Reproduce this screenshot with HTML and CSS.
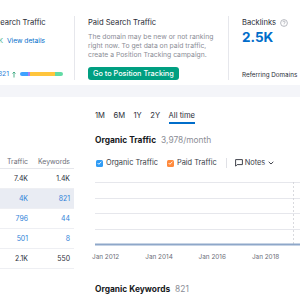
FILE: index.html
```html
<!doctype html>
<html lang="en">
  <head>
    <meta charset="UTF-8" />
    <meta name="viewport" content="width=device-width, initial-scale=1.0" />
    <title>Domain Overview</title>
    <link rel="stylesheet" href="styles.css">
  </head>
  <body>
    <div class="page">
      <section class="summary">
        <div class="summary-col organic">
          <div class="summary-title">Organic Search Traffic</div>
          <div class="link-row">
            <span class="trend">+12.5K</span>
            <a class="link" href="#">View details</a>
          </div>
          <div class="summary-foot">
            <span class="foot-count"><span class="foot-label">Keywords</span> 821</span>
            <svg class="up" width="4" height="7" viewBox="0 0 4 7">
              <path d="M2 6.5V1M0.5 2.5L2 1l1.5 1.5" fill="none" stroke="#3aa77f" stroke-width="0.9" />
            </svg>
            <div class="dist-bar">
              <span class="seg seg-blue" style="width: 18.6%"></span>
              <span class="seg seg-purple" style="width: 4.7%"></span>
              <span class="seg seg-yellow" style="width: 58.1%"></span>
              <span class="seg seg-green" style="width: 18.6%"></span>
            </div>
          </div>
        </div>

        <div class="summary-col paid">
          <div class="summary-title">Paid Search Traffic</div>
          <p class="paid-text">The domain may be new or not ranking right now. To get data on paid traffic, create a Position Tracking campaign.</p>
          <button class="green-button">Go to Position Tracking</button>
        </div>

        <div class="summary-col backlinks">
          <div class="summary-title">
            Backlinks
            <svg class="help" width="8" height="8" viewBox="0 0 8 8">
              <circle cx="4" cy="4" r="3.4" fill="none" stroke="#a6a8b1" stroke-width="0.8" />
              <path d="M2.9 3.2a1.1 1.1 0 1 1 1.5 1c-.3.1-.4.3-.4.6" fill="none" stroke="#a6a8b1" stroke-width="0.8" />
              <circle cx="4" cy="5.9" r="0.45" fill="#a6a8b1" />
            </svg>
          </div>
          <div class="big-number">2.5K</div>
          <div class="summary-sub">Referring Domains</div>
        </div>
      </section>

      <section class="overview">
        <div class="countries">
          <table class="country-table">
            <thead>
              <tr>
                <th class="name-col">Country</th>
                <th class="traffic-col">Traffic</th>
                <th class="keywords-col">Keywords</th>
              </tr>
            </thead>
            <tbody>
              <tr>
                <td class="name-col">Worldwide</td>
                <td>7.4K</td>
                <td>1.4K</td>
              </tr>
              <tr class="selected">
                <td class="name-col">United States</td>
                <td class="num-link">4K</td>
                <td class="num-link">821</td>
              </tr>
              <tr>
                <td class="name-col">India</td>
                <td class="num-link">796</td>
                <td class="num-link">44</td>
              </tr>
              <tr>
                <td class="name-col">Canada</td>
                <td class="num-link">501</td>
                <td class="num-link">8</td>
              </tr>
              <tr class="total">
                <td class="name-col">Other</td>
                <td>2.1K</td>
                <td>550</td>
              </tr>
            </tbody>
          </table>
        </div>

        <div class="trend-panel">
          <div class="tabs">
            <span class="tab">1M</span>
            <span class="tab">6M</span>
            <span class="tab">1Y</span>
            <span class="tab">2Y</span>
            <span class="tab active">All time</span>
          </div>

          <div class="panel-title">Organic Traffic <span class="muted">3,978/month</span></div>

          <div class="legend">
            <span class="check check-blue">
              <svg width="5" height="4" viewBox="0 0 5 4"><path d="M0.6 2l1.3 1.3L4.4 0.7" fill="none" stroke="#fff" stroke-width="0.9" /></svg>
            </span>
            <span class="legend-label">Organic Traffic</span>
            <span class="check check-orange">
              <svg width="5" height="4" viewBox="0 0 5 4"><path d="M0.6 2l1.3 1.3L4.4 0.7" fill="none" stroke="#fff" stroke-width="0.9" /></svg>
            </span>
            <span class="legend-label">Paid Traffic</span>
            <span class="legend-divider"></span>
            <svg class="notes-icon" width="8" height="8" viewBox="0 0 8 8">
              <path d="M0.6 0.6h6.8v5H2.2L0.6 7.2z" fill="none" stroke="#2b2e38" stroke-width="0.9" stroke-linejoin="round" />
            </svg>
            <span class="legend-label notes">Notes</span>
            <svg width="6" height="4" viewBox="0 0 6 4"><path d="M0.7 0.8L3 3l2.3-2.2" fill="none" stroke="#2b2e38" stroke-width="0.9" /></svg>
          </div>

          <svg class="chart" width="205" height="68" viewBox="0 0 205 68">
            <g stroke="#e6e7ec" stroke-width="1">
              <line x1="0" y1="4.5" x2="205" y2="4.5" />
              <line x1="0" y1="20.5" x2="205" y2="20.5" />
              <line x1="0" y1="35.5" x2="205" y2="35.5" />
              <line x1="0" y1="51.5" x2="205" y2="51.5" />
            </g>
            <line x1="198.5" y1="4" x2="198.5" y2="66" stroke="#cfd0d6" stroke-width="0.8" stroke-dasharray="2 2" />
            <line x1="0" y1="66.5" x2="205" y2="66.5" stroke="#8ea7c9" stroke-width="2" />
          </svg>

          <div class="axis">
            <span>Jan 2012</span>
            <span>Jan 2014</span>
            <span>Jan 2016</span>
            <span>Jan 2018</span>
          </div>

          <div class="panel-title keywords-title">Organic Keywords <span class="muted">821</span></div>
        </div>
      </section>
    </div>
  </body>
</html>
```

FILE: styles.css
```css
* {
  box-sizing: border-box;
  margin: 0;
  padding: 0;
}

body {
  background-color: #f4f5f9;
  font-family: Inter, 'Noto Sans', sans-serif;
  color: #171a22;
  width: 300px;
  height: 300px;
  overflow: hidden;
}

.page {
  width: 300px;
}

/* summary widgets */

.summary {
  display: flex;
  height: 85px;
  padding: 16px 0 5px;
  background-color: #fff;
}

.summary-col {
  display: flex;
  flex-direction: column;
  flex-shrink: 0;
}

.summary-title {
  display: flex;
  align-items: center;
  gap: 3px;
  font-size: 7.6px;
  line-height: 13px;
  color: #2b2e38;
  white-space: nowrap;
}

.organic {
  width: 126px;
  margin-left: -51px;
  padding-left: 16px;
  border-right: 1px solid #e6e7ec;
}

.link-row {
  display: flex;
  align-items: center;
  gap: 4px;
  margin-top: 6px;
  font-size: 6.7px;
  line-height: 12px;
}

.trend {
  width: 38px;
  text-align: right;
  color: #3aa77f;
}

.link {
  color: #006dca;
  text-decoration: none;
}

.summary-foot {
  display: flex;
  align-items: center;
  margin-top: auto;
  font-size: 6.8px;
  line-height: 12px;
  white-space: nowrap;
}

.foot-count {
  display: flex;
  justify-content: flex-end;
  gap: 2px;
  width: 44px;
  color: #2f7fd8;
}

.foot-label {
  color: #6c6e79;
}

.up {
  flex-shrink: 0;
  margin-left: 3px;
}

.dist-bar {
  display: flex;
  flex-shrink: 0;
  width: 43px;
  height: 4px;
  margin-left: 4px;
  border-radius: 2px;
  overflow: hidden;
}

.seg {
  height: 100%;
}

.seg-blue {
  background-color: #3ea2ff;
}
.seg-purple {
  background-color: #a97df2;
}
.seg-yellow {
  background-color: #ffc53d;
}
.seg-green {
  background-color: #62dba5;
}

.paid {
  width: 154px;
  padding: 0 13px;
  border-right: 1px solid #e6e7ec;
}

.paid-text {
  margin-top: 3px;
  font-size: 6.8px;
  line-height: 9px;
  color: #8b8d96;
}

.green-button {
  align-self: flex-start;
  margin-top: auto;
  height: 13.5px;
  padding: 0 5px;
  border: none;
  border-radius: 3px;
  background-color: #009f81;
  color: #fff;
  font-family: Inter, 'Noto Sans', sans-serif;
  font-size: 7.3px;
  font-weight: 500;
}

.backlinks {
  padding-left: 13px;
}

.help {
  margin-left: 1px;
}

.big-number {
  font-size: 13.5px;
  line-height: 16px;
  font-weight: 700;
  color: #006dca;
}

.summary-sub {
  margin-top: auto;
  font-size: 6.3px;
  line-height: 10px;
  color: #2b2e38;
  white-space: nowrap;
}

/* overview */

.overview {
  display: flex;
  height: 220px;
  margin-top: 12px;
  background-color: #fff;
}

.countries {
  flex-shrink: 0;
  width: 180px;
  margin-left: -106px;
  padding-top: 60px;
}

.country-table {
  width: 180px;
  table-layout: fixed;
  border-collapse: collapse;
  font-size: 6.9px;
}

.country-table th {
  height: 11px;
  padding: 0 4px 1px 0;
  border-bottom: 1px solid #e6e7ec;
  font-weight: 400;
  color: #6c6e79;
  text-align: right;
  vertical-align: top;
}

.country-table td {
  height: 20px;
  padding: 0 4px 0 0;
  border-bottom: 1px solid #eeeff3;
  text-align: right;
  color: #2b2e38;
}

.country-table .name-col {
  width: 108px;
  text-align: left;
}

.country-table .traffic-col {
  width: 30px;
}

.country-table .keywords-col {
  width: 42px;
}

.country-table .selected td {
  background-color: #e9ecf3;
}

.country-table .num-link {
  color: #2f7fd8;
}

.country-table .total td {
  border-top: 1px solid #c9cad1;
}

.trend-panel {
  flex: 1;
  padding: 13px 0 0 21px;
  min-width: 0;
}

.tabs {
  display: flex;
  gap: 8.5px;
  font-size: 7.6px;
  line-height: 12px;
  color: #2b2e38;
}

.tab {
  border-bottom: 2px solid transparent;
}

.tab.active {
  border-bottom-color: #006dca;
}

.panel-title {
  margin-top: 10px;
  font-size: 8.4px;
  line-height: 12px;
  font-weight: 700;
  white-space: nowrap;
}

.muted {
  margin-left: 3px;
  font-weight: 400;
  color: #8b8d96;
}

.legend {
  display: flex;
  align-items: center;
  margin-top: 11px;
  font-size: 7.4px;
  line-height: 12px;
  color: #3a3d48;
  white-space: nowrap;
}

.check {
  display: flex;
  align-items: center;
  justify-content: center;
  width: 7px;
  height: 7px;
  margin: 0 3px 0 1px;
  border-radius: 1.5px;
}

.check-blue {
  background-color: #2f9bf5;
}

.check-orange {
  background-color: #ff8a3d;
  margin-left: 9px;
}

.legend-divider {
  width: 1px;
  height: 10px;
  margin: 0 8px 0 9px;
  background-color: #e0e1e6;
}

.notes-icon {
  margin-right: 2px;
}

.notes {
  margin-right: 3px;
}

.chart {
  display: block;
  margin-top: 9px;
}

.axis {
  display: flex;
  margin: 6px 0 0 -3px;
  font-size: 6.4px;
  line-height: 10px;
  color: #6c6e79;
}

.axis span {
  width: 53.3px;
  flex-shrink: 0;
}

.keywords-title {
  margin-top: 21px;
}
```
